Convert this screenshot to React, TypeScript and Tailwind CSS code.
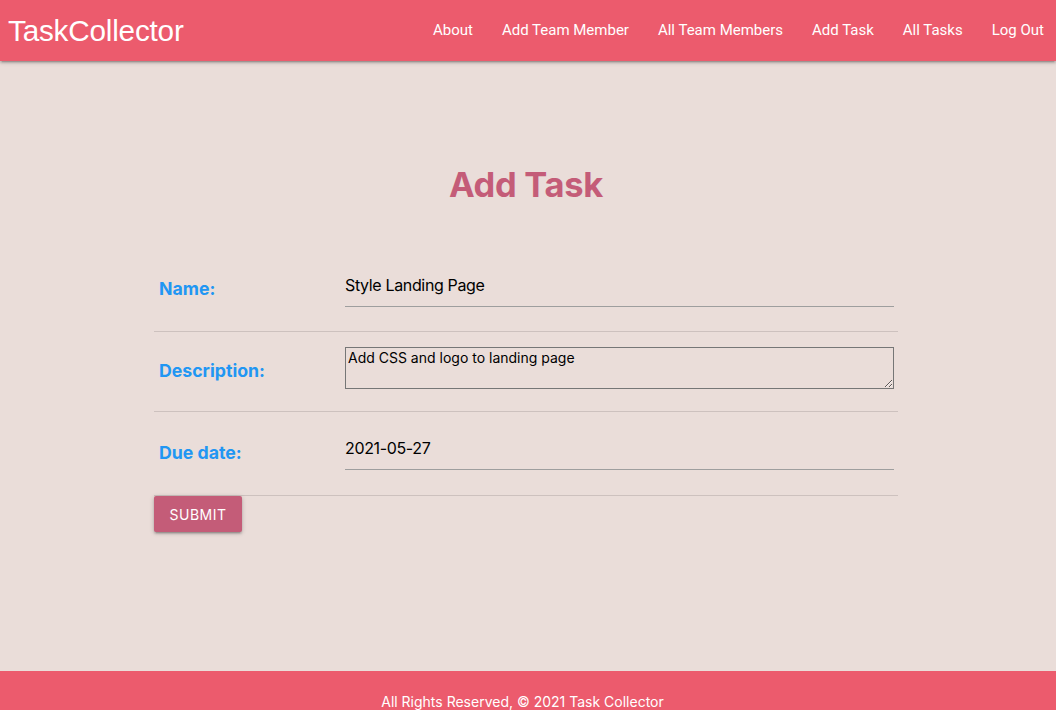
import React from "react";

const links = ["About", "Add Team Member", "All Team Members", "Add Task", "All Tasks", "Log Out"];

export default function App() {
  return (
    <div className="w-[1056px] bg-[#eaddd9] font-['Inter',sans-serif]">
      <header className="relative z-10 h-[61px] bg-[#ec5b6d] flex items-center justify-between shadow-[0_2px_2px_0_rgba(0,0,0,0.14),0_3px_1px_-2px_rgba(0,0,0,0.12),0_1px_5px_0_rgba(0,0,0,0.2)]">
        <div className="pl-[8px] text-white text-[29.7px] leading-none font-['Liberation_Sans',Arial,sans-serif] tracking-[-0.2px]">
          TaskCollector
        </div>
        <nav className="flex -mr-[2.5px] font-['Roboto',sans-serif] text-[15px] text-white">
          {links.map((l) => (
            <a key={l} className="px-[14.5px] leading-[59px] cursor-pointer">
              {l}
            </a>
          ))}
        </nav>
      </header>
      <main className="h-[610px] pt-[100px]">
        <div className="ml-[154px] w-[744px]">
          <h1 className="text-center text-[34.5px] leading-[48px] font-bold text-[#c45c78] mb-[39px] tracking-[-0.3px]">
            Add Task
          </h1>
          <div className="flex flex-col">
            <div className="flex items-center h-[84px] border-b border-[#cdc1be]">
              <label className="w-[191px] pl-[5px] text-[17.7px] font-bold text-[#2196f3]">Name:</label>
              <div className="flex-1 pr-[4px] pt-[11px] pb-[25px] self-stretch">
                <input
                  readOnly
                  defaultValue="Style Landing Page"
                  className="w-full h-[48px] bg-transparent border-b border-[#9e9e9e] outline-none text-[16px] tracking-[-0.35px] text-black pt-[4px]"
                />
              </div>
            </div>
            <div className="flex items-center h-[80px] border-b border-[#cdc1be]">
              <label className="w-[191px] pl-[5px] text-[17.7px] font-bold text-[#2196f3]">Description:</label>
              <div className="flex-1 pr-[4px] pt-[15px] pb-[22px] self-stretch">
                <textarea
                  readOnly
                  defaultValue="Add CSS and logo to landing page"
                  className="block w-full h-[42px] bg-transparent border border-[#767676] outline-none text-[14px] leading-[17px] text-black px-[2px] py-[1px]"
                />
              </div>
            </div>
            <div className="flex items-center h-[84px] border-b border-[#cdc1be]">
              <label className="w-[191px] pl-[5px] text-[17.7px] font-bold text-[#2196f3]">Due date:</label>
              <div className="flex-1 pr-[4px] pt-[10px] pb-[25px] self-stretch">
                <input
                  readOnly
                  defaultValue="2021-05-27"
                  className="w-full h-[48px] bg-transparent border-b border-[#9e9e9e] outline-none text-[16px] tracking-[-0.35px] text-black pt-[4px]"
                />
              </div>
            </div>
          </div>
          <button className="h-[36px] px-[15.5px] bg-[#c45c78] text-white text-[14px] tracking-[0.5px] uppercase rounded-[2px] shadow-[0_2px_2px_0_rgba(0,0,0,0.14),0_3px_1px_-2px_rgba(0,0,0,0.12),0_1px_5px_0_rgba(0,0,0,0.2)]">
            Submit
          </button>
        </div>
      </main>
      <footer className="bg-[#ec5b6d] pt-[19px] pb-[20px] pr-[11px] text-center text-white text-[14px] leading-[24px]">
        All Rights Reserved, © 2021 Task Collector
      </footer>
    </div>
  );
}
